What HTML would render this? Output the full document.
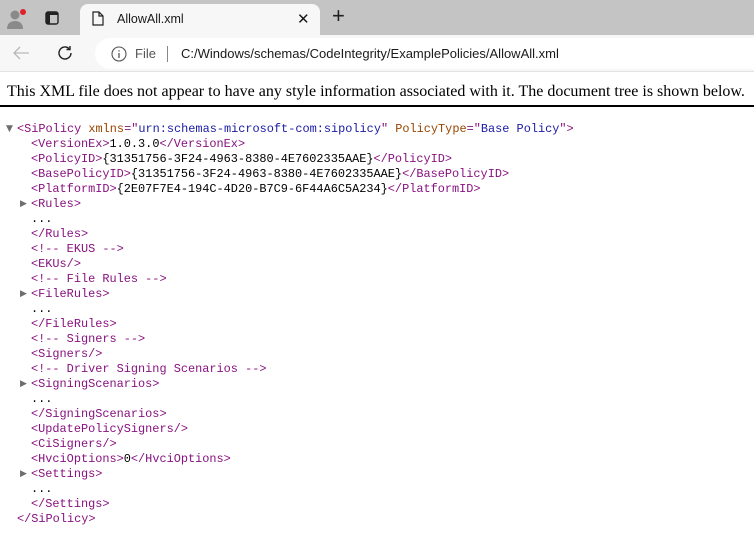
<!DOCTYPE html>
<html><head><meta charset="utf-8"><style>
*{margin:0;padding:0;box-sizing:border-box}
body{width:754px;height:536px;overflow:hidden;background:#fff;position:relative;font-family:"Liberation Sans",sans-serif}
.tabbar{position:absolute;left:0;top:0;width:754px;height:35px;background:#c4c4c4}
.tab{position:absolute;left:80px;top:4px;width:240px;height:33px;background:#f7f7f7;border-radius:8px 8px 0 0}
.toolbar{position:absolute;left:0;top:35px;width:754px;height:37px;background:#f7f7f7;border-bottom:1px solid #e3e3e3}
.addr{position:absolute;left:95px;top:3px;width:680px;height:31px;background:#fff;border-radius:16px}
.t{position:absolute;font-size:12.5px;color:#1a1a1a;white-space:nowrap}
.hdr{position:absolute;left:7px;top:83px;font-family:"Liberation Serif",serif;font-size:16px;color:#000;white-space:nowrap}
.rule{position:absolute;left:0;top:105px;width:754px;height:2px;background:#000}
.xml{position:absolute;left:0;top:122px;font-family:"Liberation Mono",monospace;font-size:11.9px;color:#000}
.xml div{height:15px;line-height:15px;position:relative;padding-left:31px;white-space:pre}
.xml div.r{padding-left:17px}
.g{color:#881280}.a{color:#994500}.v{color:#1a1aa6}
.ar{position:absolute;top:0;color:#6e6e6e;font-size:9px;font-family:"DejaVu Sans",sans-serif}
</style></head><body>
<div class="tabbar">
 <svg style="position:absolute;left:6px;top:8px" width="22" height="22" viewBox="0 0 22 22"><circle cx="9" cy="7" r="4.5" fill="#8a8a8a"/><path d="M1 21c0-6 4-8 8-8s8 2 8 8z" fill="#8a8a8a"/><circle cx="17" cy="4" r="3" fill="#e0202a"/></svg>
 <svg style="position:absolute;left:45px;top:11px" width="14" height="14" viewBox="0 0 14 14"><rect x="1" y="1" width="12" height="12" rx="2" fill="none" stroke="#222" stroke-width="1.4"/><rect x="1" y="1" width="4" height="12" fill="#222"/><rect x="1" y="1" width="12" height="3" fill="#222"/></svg>
 <div class="tab">
  <svg style="position:absolute;left:12px;top:7px" width="12" height="15" viewBox="0 0 12 15"><path d="M1 1h6l4 4v9H1z M7 1v4h4" fill="none" stroke="#222" stroke-width="1.2"/></svg>
  <div class="t" style="left:37px;top:8px">AllowAll.xml</div>
  <div class="t" style="left:217px;top:6px;font-size:15px">✕</div>
 </div>
 <div class="t" style="left:332px;top:3px;font-size:22px;font-weight:300;color:#222">+</div>
</div>
<div class="toolbar">
 <svg style="position:absolute;left:12px;top:10px" width="18" height="16" viewBox="0 0 18 16"><path d="M17 8H2M8 2L2 8l6 6" fill="none" stroke="#b8b8b8" stroke-width="1.3"/></svg>
 <svg style="position:absolute;left:56px;top:9px" width="18" height="18" viewBox="0 0 18 18"><path d="M15 9a6 6 0 1 1-2-4.5M14 2v3.5h-3.5" fill="none" stroke="#222" stroke-width="1.4"/></svg>
 <div class="addr">
  <svg style="position:absolute;left:16px;top:8px" width="16" height="16" viewBox="0 0 16 16"><circle cx="8" cy="8" r="7" fill="none" stroke="#555" stroke-width="1.1"/><path d="M8 7v5M8 4.3v1.2" stroke="#555" stroke-width="1.3"/></svg>
  <div class="t" style="left:40px;top:8px;color:#555;font-size:13px">File</div>
  <div style="position:absolute;left:72px;top:8px;width:1px;height:16px;background:#888"></div>
  <div class="t" style="left:86px;top:8px;font-size:13px">C:/Windows/schemas/CodeIntegrity/ExamplePolicies/AllowAll.xml</div>
 </div>
</div>
<div class="hdr">This XML file does not appear to have any style information associated with it. The document tree is shown below.</div>
<div class="rule"></div>
<div class="xml">
<div class="r"><span class="ar" style="left:6px">▼</span><span class="g">&lt;SiPolicy</span> <span class="a">xmlns</span><span class="g">="</span><span class="v">urn:schemas-microsoft-com:sipolicy</span><span class="g">"</span> <span class="a">PolicyType</span><span class="g">="</span><span class="v">Base Policy</span><span class="g">"&gt;</span></div>
<div><span class="g">&lt;VersionEx&gt;</span>1.0.3.0<span class="g">&lt;/VersionEx&gt;</span></div>
<div><span class="g">&lt;PolicyID&gt;</span>{31351756-3F24-4963-8380-4E7602335AAE}<span class="g">&lt;/PolicyID&gt;</span></div>
<div><span class="g">&lt;BasePolicyID&gt;</span>{31351756-3F24-4963-8380-4E7602335AAE}<span class="g">&lt;/BasePolicyID&gt;</span></div>
<div><span class="g">&lt;PlatformID&gt;</span>{2E07F7E4-194C-4D20-B7C9-6F44A6C5A234}<span class="g">&lt;/PlatformID&gt;</span></div>
<div><span class="ar" style="left:20px">▶</span><span class="g">&lt;Rules&gt;</span></div>
<div>...</div>
<div><span class="g">&lt;/Rules&gt;</span></div>
<div><span class="g">&lt;!-- EKUS --&gt;</span></div>
<div><span class="g">&lt;EKUs/&gt;</span></div>
<div><span class="g">&lt;!-- File Rules --&gt;</span></div>
<div><span class="ar" style="left:20px">▶</span><span class="g">&lt;FileRules&gt;</span></div>
<div>...</div>
<div><span class="g">&lt;/FileRules&gt;</span></div>
<div><span class="g">&lt;!-- Signers --&gt;</span></div>
<div><span class="g">&lt;Signers/&gt;</span></div>
<div><span class="g">&lt;!-- Driver Signing Scenarios --&gt;</span></div>
<div><span class="ar" style="left:20px">▶</span><span class="g">&lt;SigningScenarios&gt;</span></div>
<div>...</div>
<div><span class="g">&lt;/SigningScenarios&gt;</span></div>
<div><span class="g">&lt;UpdatePolicySigners/&gt;</span></div>
<div><span class="g">&lt;CiSigners/&gt;</span></div>
<div><span class="g">&lt;HvciOptions&gt;</span>0<span class="g">&lt;/HvciOptions&gt;</span></div>
<div><span class="ar" style="left:20px">▶</span><span class="g">&lt;Settings&gt;</span></div>
<div>...</div>
<div><span class="g">&lt;/Settings&gt;</span></div>
<div class="r"><span class="g">&lt;/SiPolicy&gt;</span></div>
</div>
</body></html>
